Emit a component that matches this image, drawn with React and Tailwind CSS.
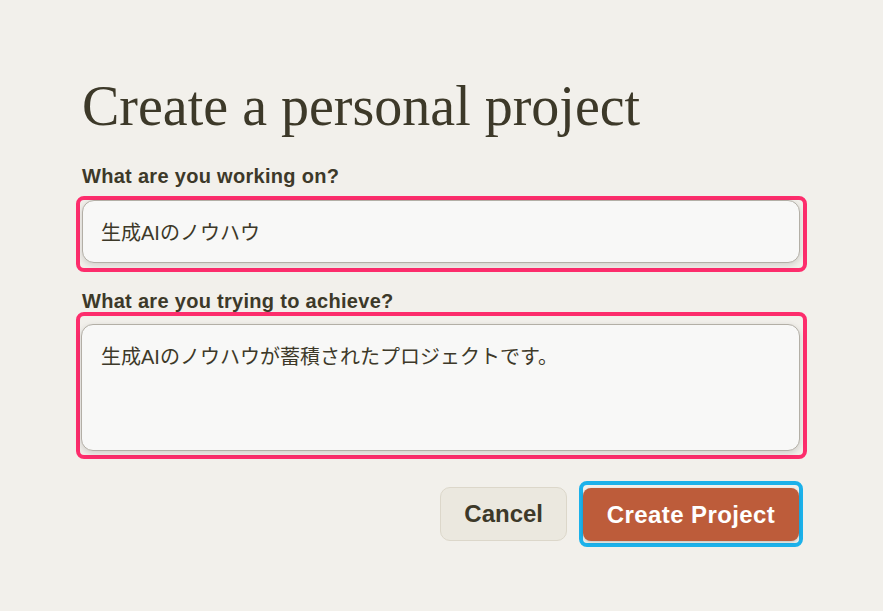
import { useState } from "react";

function App() {
  const [name, setName] = useState("生成AIのノウハウ");
  const [goal, setGoal] = useState("生成AIのノウハウが蓄積されたプロジェクトです。");

  const sans = "font-['Liberation_Sans','Noto_Sans_CJK_JP',sans-serif]";

  return (
    <div className="min-h-screen w-full bg-[#f2f0eb] text-[#3d3929]">
      <div className="ml-[76px] w-[731px] pt-[78px] flex flex-col">
        <h1 className="pl-[6px] font-['Liberation_Serif',serif] text-[56px] leading-none font-normal text-[#3d3929]">
          Create a personal project
        </h1>

        {/* project name */}
        <label className={`mt-[30px] pl-[6px] ${sans} text-[20px] leading-[24px] font-bold tracking-[0.3px]`}>
          What are you working on?
        </label>
        <div className="mt-[8px] rounded-[8px] border-4 border-[#fd2d6c] pl-[2px] pr-[3px] pb-[5px]">
          <input
            value={name}
            onChange={(e) => setName(e.target.value)}
            className={`block w-full h-[63px] rounded-[12px] border border-[#b3afa6] bg-[#f8f8f7] pl-[18px] pr-4 ${sans} text-[20px] text-[#3d3929] outline-none shadow-[0_2px_6px_rgba(0,0,0,0.14)]`}
          />
        </div>

        {/* project goal */}
        <label className={`mt-[17px] pl-[6px] ${sans} text-[20px] leading-[24px] font-bold tracking-[0.3px]`}>
          What are you trying to achieve?
        </label>
        <div className="-mt-px rounded-[8px] border-4 border-[#fd2d6c] pl-[1px] pr-[3px] pt-[8px] pb-[4px]">
          <textarea
            value={goal}
            onChange={(e) => setGoal(e.target.value)}
            className={`block w-full h-[127px] resize-none rounded-[12px] border border-[#b3afa6] bg-[#f8f8f7] pl-[19px] pr-4 pt-[17px] ${sans} text-[20px] leading-[30px] text-[#3d3929] outline-none shadow-[0_2px_6px_rgba(0,0,0,0.14)]`}
          />
        </div>

        {/* actions */}
        <div className="mt-[22px] flex items-start justify-end pr-[4px]">
          <button
            className={`mt-[6px] h-[54px] px-[23px] rounded-[10px] border border-[#dcd7ca] bg-[#ebe8df] ${sans} text-[24px] font-bold text-[#3d3929]`}
          >
            Cancel
          </button>
          <div className="ml-[12px] rounded-[8px] border-4 border-[#1cb1ea] pt-[3px] pb-[2px]">
            <button
              className={`h-[53px] w-[216px] rounded-[8px] bg-[#bd5c3a] ${sans} text-[24px] font-bold tracking-[0.4px] text-white shadow-[0_1px_3px_rgba(0,0,0,0.2)]`}
            >
              Create Project
            </button>
          </div>
        </div>
      </div>
    </div>
  );
}

export default App;
